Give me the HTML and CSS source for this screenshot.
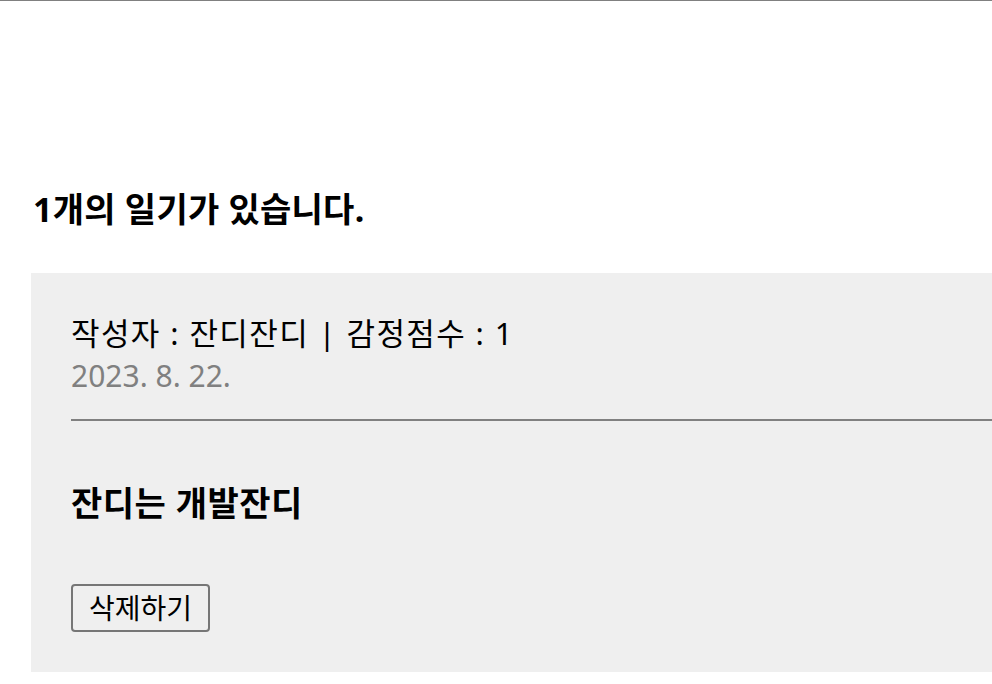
FILE: index.html
```html
<!DOCTYPE html>
<html lang="ko">
<head>
<meta charset="utf-8">
<link rel="stylesheet" href="styles.css">
</head>
<body>
<div class="page">
  <div class="list">
    <h2 class="count">1개의 일기가 있습니다.</h2>
    <div class="item">
      <div class="info">
        <div class="meta">작성자 : 잔디잔디 | 감정점수 : 1</div>
        <div class="date">2023. 8. 22.</div>
      </div>
      <div class="content">잔디는 개발잔디</div>
      <button class="delete">삭제하기</button>
    </div>
  </div>
</div>
</body>
</html>
```

FILE: styles.css
```css
html, body {
  margin: 0;
  padding: 0;
  background: #ffffff;
  overflow: hidden;
}
body {
  font-family: "Noto Sans", "Noto Sans CJK KR", sans-serif;
  color: #000000;
}
.page {
  border-top: 1px solid #808080;
  height: 683px;
}
.list {
  padding: 0 0 0 31px;
}
.count {
  margin: 0;
  padding: 186px 0 0 2px;
  font-size: 34px;
  font-weight: 700;
  line-height: 44px;
  letter-spacing: 0.25px;
}
.item {
  margin-top: 42px;
  background: #efefef;
  padding: 40px 0 40px 40px;
}
.info {
  padding-bottom: 20px;
  border-bottom: 2px solid #808080;
}
.meta {
  font-size: 31px;
  line-height: 40px;
  letter-spacing: 1.4px;
}
.date {
  font-size: 30px;
  line-height: 46px;
  color: #808080;
}
.content {
  font-size: 34px;
  font-weight: 700;
  margin: 60px 0 0 0;
  line-height: 44px;
  letter-spacing: 0.5px;
}
.delete {
  display: block;
  margin-top: 59px;
  font-family: inherit;
  font-size: 28px;
  line-height: 36px;
  padding: 4px 16px;
  background: #efefef;
  border: 2px solid #767676;
  border-radius: 4px;
  color: #000000;
}
```
